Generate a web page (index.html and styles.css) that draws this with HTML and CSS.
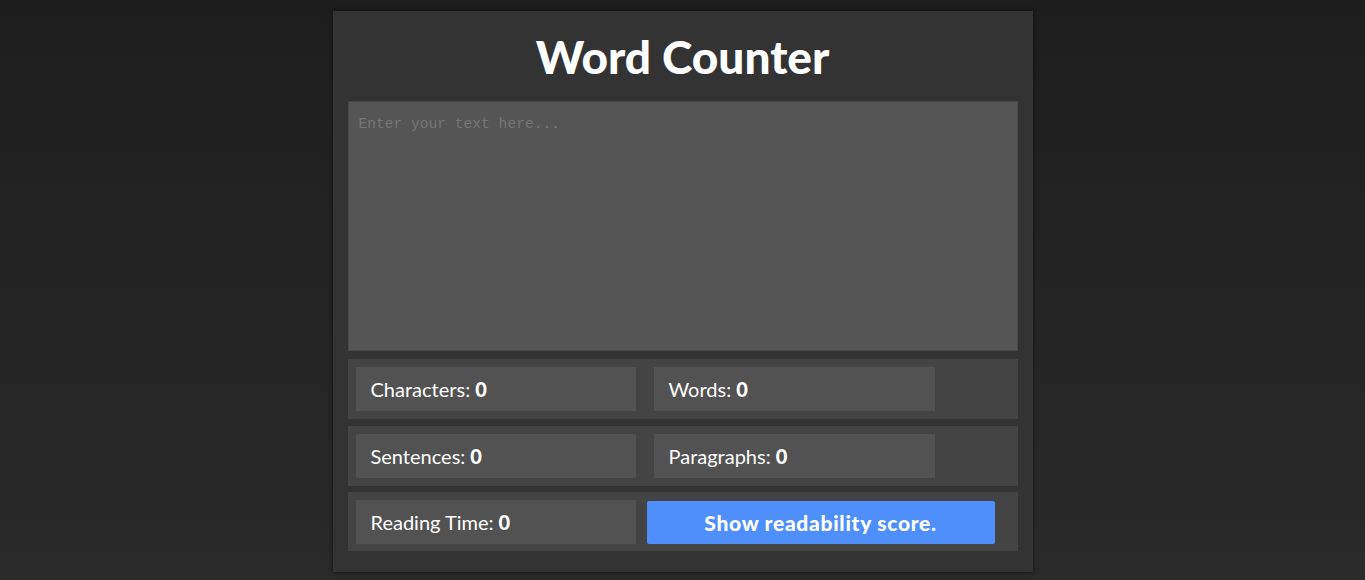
FILE: index.html
```html
<!DOCTYPE html>
<html lang="en">
<head>
<meta charset="utf-8">
<title>Word Counter</title>
<link rel="stylesheet" href="styles.css">
</head>
<body>
<main class="app">
  <h1 class="title">Word Counter</h1>
  <textarea class="input" placeholder="Enter your text here..."></textarea>
  <div class="row">
    <div class="stat">Characters: <b>0</b></div>
    <div class="stat stat-right">Words: <b>0</b></div>
  </div>
  <div class="row">
    <div class="stat">Sentences: <b>0</b></div>
    <div class="stat stat-right">Paragraphs: <b>0</b></div>
  </div>
  <div class="row">
    <div class="stat">Reading Time: <b>0</b></div>
    <button class="btn">Show readability score.</button>
  </div>
</main>
</body>
</html>
```
FILE: styles.css
```css
html, body {
  margin: 0;
  height: 100%;
}
body {
  background: linear-gradient(180deg, #1d1d1d 0%, #2a2a2a 100%);
  font-family: Lato, "Liberation Sans", sans-serif;
  color: #fff;
  padding-top: 11px;
  box-sizing: border-box;
}
.app {
  width: 700px;
  box-sizing: border-box;
  margin: 0 auto;
  background: #333;
  padding: 15px 15px 21px;
  box-shadow: 0 0 4px rgba(0, 0, 0, 0.6);
  display: flex;
  flex-direction: column;
}
.title {
  margin: -15px 0 0;
  height: 90px;
  line-height: 92px;
  text-align: center;
  font-size: 46px;
  font-weight: 900;
  letter-spacing: 0;
}
.input {
  display: block;
  width: 670px;
  height: 250px;
  box-sizing: border-box;
  background: #555;
  border: 1px solid #4a4a4a;
  border-top-color: #444;
  resize: none;
  padding: 14px 10px 10px;
  font-family: "Liberation Mono", monospace;
  font-size: 14.6px;
  color: #eee;
  margin: 0 0 8px;
  outline: none;
}
.input::placeholder {
  color: #767676;
}
.row {
  background: #444;
  padding: 8px;
  display: flex;
  align-items: center;
  margin-bottom: 7px;
}
.row + .row + .row {
  margin-top: -1px;
  padding-bottom: 7px;
}
.row:last-child {
  margin-bottom: 0;
}
.stat {
  width: 280px;
  height: 44px;
  box-sizing: border-box;
  background: #525252;
  padding-left: 15px;
  display: flex;
  align-items: center;
  font-size: 20px;
}
.stat b {
  font-weight: 900;
  margin-left: 5px;
}
.stat-right {
  width: 281px;
  margin-left: 18px;
}
.btn {
  margin-left: 11px;
  width: 348px;
  height: 43px;
  background: #4f8ffc;
  border: none;
  border-radius: 2px;
  color: #fff;
  font-family: Lato, "Liberation Sans", sans-serif;
  font-weight: 900;
  font-size: 21px;
  letter-spacing: 0.7px;
  padding: 0;
  cursor: pointer;
}
```
